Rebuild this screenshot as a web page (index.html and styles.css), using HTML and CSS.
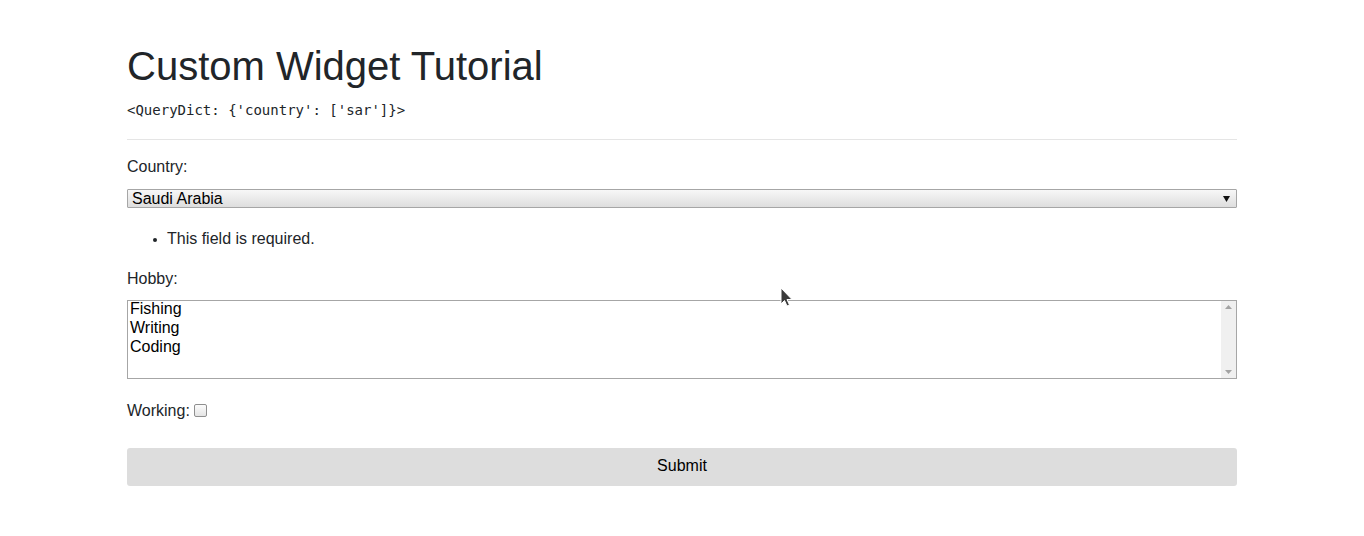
FILE: index.html
```html
<!DOCTYPE html>
<html>
<head>
<meta charset="utf-8">
<title>Custom Widget Tutorial</title>
<link rel="stylesheet" href="styles.css">
</head>
<body>
<div class="container">
  <h1 class="title">Custom Widget Tutorial</h1>
  <pre class="dump">&lt;QueryDict: {'country': ['sar']}&gt;</pre>
  <hr class="rule">
  <form class="form">
    <div class="field">
      <label class="label">Country:</label>
      <div class="select">
        <span class="select-text">Saudi Arabia</span>
        <svg class="select-arrow" width="7" height="6" viewBox="0 0 7 6"><path d="M0 0H7L3.5 6Z" fill="#111"/></svg>
      </div>
      <ul class="errors">
        <li class="error"><span class="dot"></span>This field is required.</li>
      </ul>
    </div>
    <div class="field multi-field">
      <label class="label">Hobby:</label>
      <div class="multi">
        <div class="options">
          <div class="option">Fishing</div>
          <div class="option">Writing</div>
          <div class="option">Coding</div>
        </div>
        <div class="scrollbar">
          <svg width="7" height="4" viewBox="0 0 7 4"><path d="M0 4H7L3.5 0Z" fill="#a3a3a3"/></svg>
          <svg width="7" height="4" viewBox="0 0 7 4"><path d="M0 0H7L3.5 4Z" fill="#a3a3a3"/></svg>
        </div>
      </div>
    </div>
    <div class="field check-field">
      <label class="label inline">Working:</label>
      <span class="checkbox"></span>
    </div>
    <button type="button" class="submit">Submit</button>
  </form>
</div>
<svg class="cursor" width="14" height="22" viewBox="0 0 14 22"><path d="M1 1V17L4.5 13.5L7 19L9.5 18L7 12.5H12Z" fill="#3a3a3a" stroke="#fff" stroke-width="1"/></svg>
</body>
</html>
```

FILE: styles.css
```css
html, body {
  margin: 0;
  padding: 0;
  background: #fff;
}
body {
  font-family: "Liberation Sans", Arial, sans-serif;
  font-size: 16px;
  line-height: 1.5;
  color: #212529;
  position: relative;
}
.container {
  width: 1110px;
  margin: 0 auto;
  padding-top: 42px;
}
.title {
  font-size: 40px;
  font-weight: 400;
  line-height: 1.2;
  margin: 0 0 10px 0;
  color: #212529;
}
.dump {
  font-family: "DejaVu Sans Mono", "Liberation Mono", monospace;
  font-size: 14px;
  line-height: 21px;
  margin: 0 0 18px 0;
  color: #212529;
}
.rule {
  margin: 0 0 15px 0;
  border: 0;
  border-top: 1px solid rgba(0,0,0,0.1);
}
.form {
  margin: 0;
}
.field {
  margin-bottom: 16px;
}
.label {
  display: inline-block;
  margin-bottom: 10px;
}
.select {
  display: flex;
  align-items: center;
  justify-content: space-between;
  height: 17px;
  border: 1px solid #a6a6a6;
  border-radius: 1px;
  background: linear-gradient(#f7f7f7, #dedede);
  padding: 0 6px 0 4px;
  font-size: 16px;
  line-height: 17px;
  color: #000;
}
.select-arrow {
  display: block;
}
.errors {
  list-style: none;
  margin: 19px 0 0 0;
  padding-left: 40px;
}
.error {
  display: flex;
  align-items: center;
}
.dot {
  width: 4px;
  height: 4px;
  border-radius: 50%;
  background: #212529;
  margin: 1px 10px 0 -14px;
  flex: none;
}
.multi-field .label {
  margin-bottom: 9px;
}
.multi {
  display: flex;
  height: 77px;
  border: 1px solid #a6a6a6;
  background: #fff;
}
.options {
  flex: 1;
  padding: 0 2px;
  margin-top: -2px;
  color: #000;
  line-height: 19px;
}
.scrollbar {
  width: 15px;
  background: #f0f0f0;
  display: flex;
  flex-direction: column;
  justify-content: space-between;
  align-items: center;
  padding: 4px 0;
}
.scrollbar svg {
  display: block;
}
.multi-field {
  margin-bottom: 20px;
}
.check-field {
  display: flex;
  align-items: center;
  gap: 4px;
  margin-bottom: 25px;
}
.label.inline {
  margin-bottom: 0;
}
.checkbox {
  width: 11px;
  height: 11px;
  border: 1px solid #8f8f8f;
  border-radius: 2px;
  background: linear-gradient(#fcfcfc, #e4e4e4);
  margin-top: -2px;
}
.submit {
  display: block;
  width: 100%;
  height: 38px;
  border: 0;
  border-radius: 3px;
  background: #dddddd;
  font-family: "Liberation Sans", Arial, sans-serif;
  font-size: 16px;
  color: #000;
  padding: 0 0 2px 0;
}
.cursor {
  position: absolute;
  left: 780px;
  top: 287px;
}
```
